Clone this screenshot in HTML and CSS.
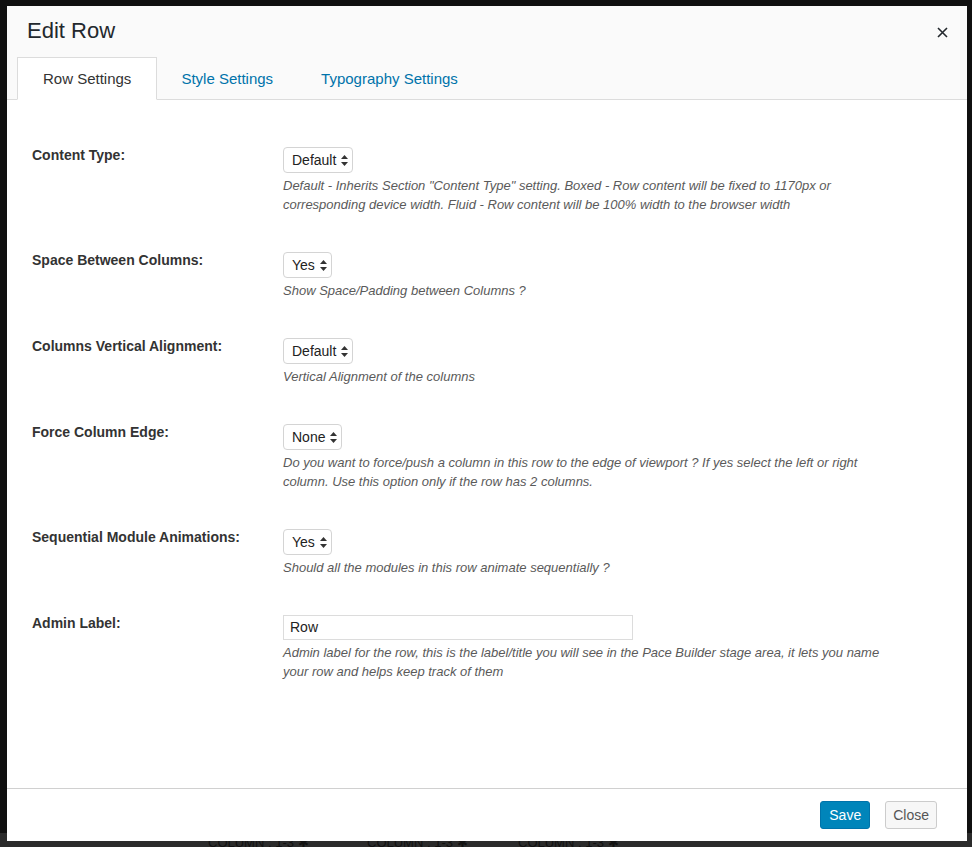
FILE: index.html
```html
<!DOCTYPE html>
<html>
<head>
<meta charset="utf-8">
<link rel="stylesheet" href="styles.css">
</head>
<body>
<div class="modal">
  <div class="modal-header">
    <div class="title-row">
      <h1 class="title">Edit Row</h1>
      <button class="close-x" aria-label="Close">
        <svg width="11" height="11" viewBox="0 0 11 11"><path d="M1 1 L10 10 M10 1 L1 10" stroke="#23282d" stroke-width="1.6" fill="none"/></svg>
      </button>
    </div>
    <ul class="tabs">
      <li class="tab active">Row Settings</li>
      <li class="tab">Style Settings</li>
      <li class="tab">Typography Settings</li>
    </ul>
  </div>
  <div class="modal-body">
    <div class="field">
      <div class="label">Content Type:</div>
      <div class="control">
        <span class="select">Default<svg class="arrows" width="7" height="11" viewBox="0 0 7 11"><path d="M3.5 0 L7 4 L0 4 Z M0 7 L7 7 L3.5 11 Z" fill="#333"/></svg></span>
        <p class="desc">Default - Inherits Section "Content Type" setting. Boxed - Row content will be fixed to 1170px or corresponding device width. Fluid - Row content will be 100% width to the browser width</p>
      </div>
    </div>
    <div class="field">
      <div class="label">Space Between Columns:</div>
      <div class="control">
        <span class="select">Yes<svg class="arrows" width="7" height="11" viewBox="0 0 7 11"><path d="M3.5 0 L7 4 L0 4 Z M0 7 L7 7 L3.5 11 Z" fill="#333"/></svg></span>
        <p class="desc">Show Space/Padding between Columns ?</p>
      </div>
    </div>
    <div class="field">
      <div class="label">Columns Vertical Alignment:</div>
      <div class="control">
        <span class="select">Default<svg class="arrows" width="7" height="11" viewBox="0 0 7 11"><path d="M3.5 0 L7 4 L0 4 Z M0 7 L7 7 L3.5 11 Z" fill="#333"/></svg></span>
        <p class="desc">Vertical Alignment of the columns</p>
      </div>
    </div>
    <div class="field">
      <div class="label">Force Column Edge:</div>
      <div class="control">
        <span class="select">None<svg class="arrows" width="7" height="11" viewBox="0 0 7 11"><path d="M3.5 0 L7 4 L0 4 Z M0 7 L7 7 L3.5 11 Z" fill="#333"/></svg></span>
        <p class="desc">Do you want to force/push a column in this row to the edge of viewport ? If yes select the left or right column. Use this option only if the row has 2 columns.</p>
      </div>
    </div>
    <div class="field">
      <div class="label">Sequential Module Animations:</div>
      <div class="control">
        <span class="select">Yes<svg class="arrows" width="7" height="11" viewBox="0 0 7 11"><path d="M3.5 0 L7 4 L0 4 Z M0 7 L7 7 L3.5 11 Z" fill="#333"/></svg></span>
        <p class="desc">Should all the modules in this row animate sequentially ?</p>
      </div>
    </div>
    <div class="field">
      <div class="label">Admin Label:</div>
      <div class="control">
        <div class="input">Row</div>
        <p class="desc">Admin label for the row, this is the label/title you will see in the Pace Builder stage area, it lets you name your row and helps keep track of them</p>
      </div>
    </div>
  </div>
  <div class="modal-footer">
    <button class="btn btn-primary">Save</button>
    <button class="btn btn-default">Close</button>
  </div>
</div>
<div class="under">
  <span class="col-label">COLUMN : 1-3 ✱</span>
  <span class="col-label">COLUMN : 1-3 ✱</span>
  <span class="col-label">COLUMN : 1-3 ✱</span>
</div>
</body>
</html>
```

FILE: styles.css
```css
* { box-sizing: border-box; }
html, body { margin: 0; padding: 0; }
body {
  background: #101010;
  font-family: "Liberation Sans", Arial, sans-serif;
  color: #333;
  height: 847px;
  overflow: hidden;
  padding: 6px 0 0 7px;
}
.modal {
  position: relative;
  z-index: 2;
  width: 960px;
  height: 835px;
  background: #fff;
  display: flex;
  flex-direction: column;
}
.modal-header {
  background: #fafafa;
  border-bottom: 1px solid #dcdcdc;
  padding: 12px 0 0 10px;
  height: 94px;
}
.title-row {
  display: flex;
  justify-content: space-between;
  align-items: center;
  height: 26px;
  padding-left: 10px;
}
.title {
  margin: 0;
  font-size: 22px;
  font-weight: normal;
  color: #23282d;
  line-height: 26px;
}
.close-x {
  border: 0;
  background: transparent;
  padding: 0;
  width: 11px;
  height: 11px;
  margin-right: 19px;
  margin-top: 2px;
  display: flex;
}
.tabs {
  list-style: none;
  margin: 13px 0 0 0;
  padding: 0;
  display: flex;
  height: 43px;
}
.tab {
  padding: 0 23px;
  height: 43px;
  line-height: 41px;
  font-size: 15px;
  color: #0073aa;
  border: 1px solid transparent;
}
.tab.active {
  background: #fff;
  color: #333;
  border-color: #dcdcdc;
  border-bottom-color: #fff;
  padding: 0 25px;
}
.modal-body {
  flex: 1;
  padding: 28px 25px 0 25px;
}
.field {
  display: flex;
  padding: 19px 0;
}
.label {
  width: 251px;
  flex: none;
  font-size: 14px;
  font-weight: bold;
  line-height: 16px;
  color: #333;
}
.control {
  width: 615px;
}
.select {
  display: inline-flex;
  align-items: center;
  height: 26px;
  padding: 0 4px 0 8px;
  border: 1px solid #d4d4d4;
  border-radius: 4px;
  font-size: 14px;
  color: #222;
  background: #fff;
}
.arrows { margin-left: 5px; }
.input {
  width: 350px;
  height: 25px;
  border: 1px solid #dcdcdc;
  padding: 0 6px;
  font-size: 14px;
  line-height: 23px;
  color: #222;
}
.desc {
  margin: 3px 0 0 0;
  font-size: 13px;
  font-style: italic;
  line-height: 19px;
  color: #5a5a5a;
}
.modal-footer {
  height: 53px;
  border-top: 1px solid #d0d0d0;
  display: flex;
  justify-content: flex-end;
  align-items: flex-start;
  gap: 15px;
  padding: 12px 30px 0 0;
}
.btn {
  height: 28px;
  border-radius: 3px;
  font-family: "Liberation Sans", Arial, sans-serif;
  font-size: 14px;
  padding: 0 7px;
}
.btn-primary {
  background: #0085ba;
  border: 1px solid #0073aa;
  color: #fff;
  padding: 0 8px;
}
.btn-default {
  background: #f7f7f7;
  border: 1px solid #cccccc;
  color: #555;
}
.under {
  display: grid;
  grid-template-columns: 159px 151px auto;
  margin-top: -8px;
  height: 20px;
  background: #2b2b2b;
  margin-left: -7px;
  padding-left: 208px;
}
.col-label {
  font-size: 13px;
  line-height: 20px;
  color: #111;
}
```
